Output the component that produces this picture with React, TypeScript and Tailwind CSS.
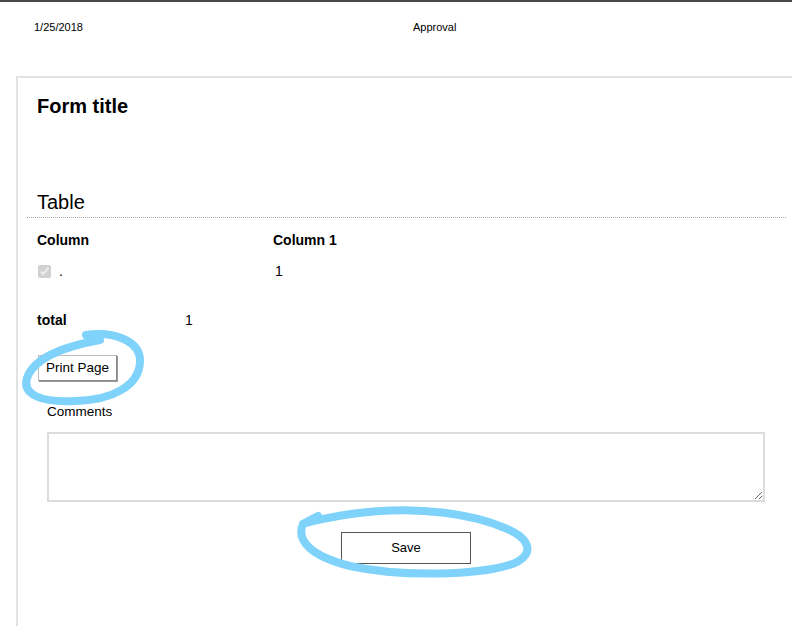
import React from 'react'

export default function App() {
  return (
    <div
      className="relative w-[792px] h-[626px] overflow-hidden bg-white text-black"
      style={{ fontFamily: '"Liberation Sans", Arial, sans-serif' }}
    >
      {/* Top bar */}
      <div className="h-[2px] bg-[#4a4a4a]" />

      {/* Print header */}
      <div className="flex items-center h-[50px] pl-[34px] text-[11px]">
        <span className="w-[379px]">1/25/2018</span>
        <span>Approval</span>
      </div>

      {/* Form panel */}
      <div className="ml-[16px] mt-[24px] border-l-2 border-t-2 border-[#e3e3e3] h-[560px] pr-[6px]">
        <div className="pl-[19px] pt-[17px]">
          <h1 className="text-[20px] font-bold leading-[22px]">Form title</h1>
        </div>

        {/* Table section */}
        <div className="mt-[73px]">
          <h2 className="pl-[19px] text-[20px] leading-[24px]">Table</h2>
          <div className="ml-[9px] mt-[3px] border-t border-dotted border-[#aaaaaa]" />

          <div className="pl-[19px] mt-[13px] text-[14px]">
            <div className="flex font-bold h-[18px] items-center">
              <span className="w-[236px]">Column</span>
              <span>Column 1</span>
            </div>
            <div className="flex items-center h-[20px] mt-[12px]">
              <div className="w-[236px] flex items-center">
                <input
                  type="checkbox"
                  checked
                  disabled
                  readOnly
                  className="ml-[1px] w-[13px] h-[13px]"
                />
                <span className="ml-[8px]">.</span>
              </div>
              <span className="pl-[2px]">1</span>
            </div>
            <div className="flex font-normal items-center h-[18px] mt-[30px]">
              <span className="w-[148px] font-bold">total</span>
              <span>1</span>
            </div>
          </div>
        </div>

        {/* Print button */}
        <div className="pl-[20px] mt-[26px]">
          <button className="h-[26px] px-[7px] text-[13.5px] bg-white border border-[#bdbdbd] border-r-[#8a8a8a] border-b-[#8a8a8a] shadow-[1px_1px_0_#9a9a9a]">
            Print Page
          </button>
        </div>

        {/* Comments */}
        <div className="pl-[29px] mt-[23px]">
          <label className="block text-[13.5px] leading-[16px]">Comments</label>
          <textarea className="mt-[12px] block w-[718px] h-[70px] border-2 border-[#dcdcdc] resize-y" />
        </div>

        {/* Save */}
        <div className="flex mt-[30px] pl-[323px]">
          <button className="w-[130px] h-[32px] text-[13px] bg-white border border-[#555555]">
            Save
          </button>
        </div>
      </div>

      {/* Hand drawn annotations */}
      <svg
        className="absolute left-0 top-0 pointer-events-none"
        width="792"
        height="626"
        viewBox="0 0 792 626"
        fill="none"
      >
        <path
          d="M86 335 C112 331 141 340 140 362 C139 386 112 400 76 401 C40 403 22 394 27 378 C33 360 60 347 100 340"
          stroke="#7fd3fb"
          strokeWidth="8"
          strokeLinecap="round"
        />
        <path
          d="M318 516 L303 524 C296 540 310 556 350 566 C400 577 480 576 515 563 C535 553 530 538 505 528 C470 513 420 508 380 511 C350 513 325 518 306 523"
          stroke="#7fd3fb"
          strokeWidth="8"
          strokeLinecap="round"
        />
      </svg>
    </div>
  )
}
